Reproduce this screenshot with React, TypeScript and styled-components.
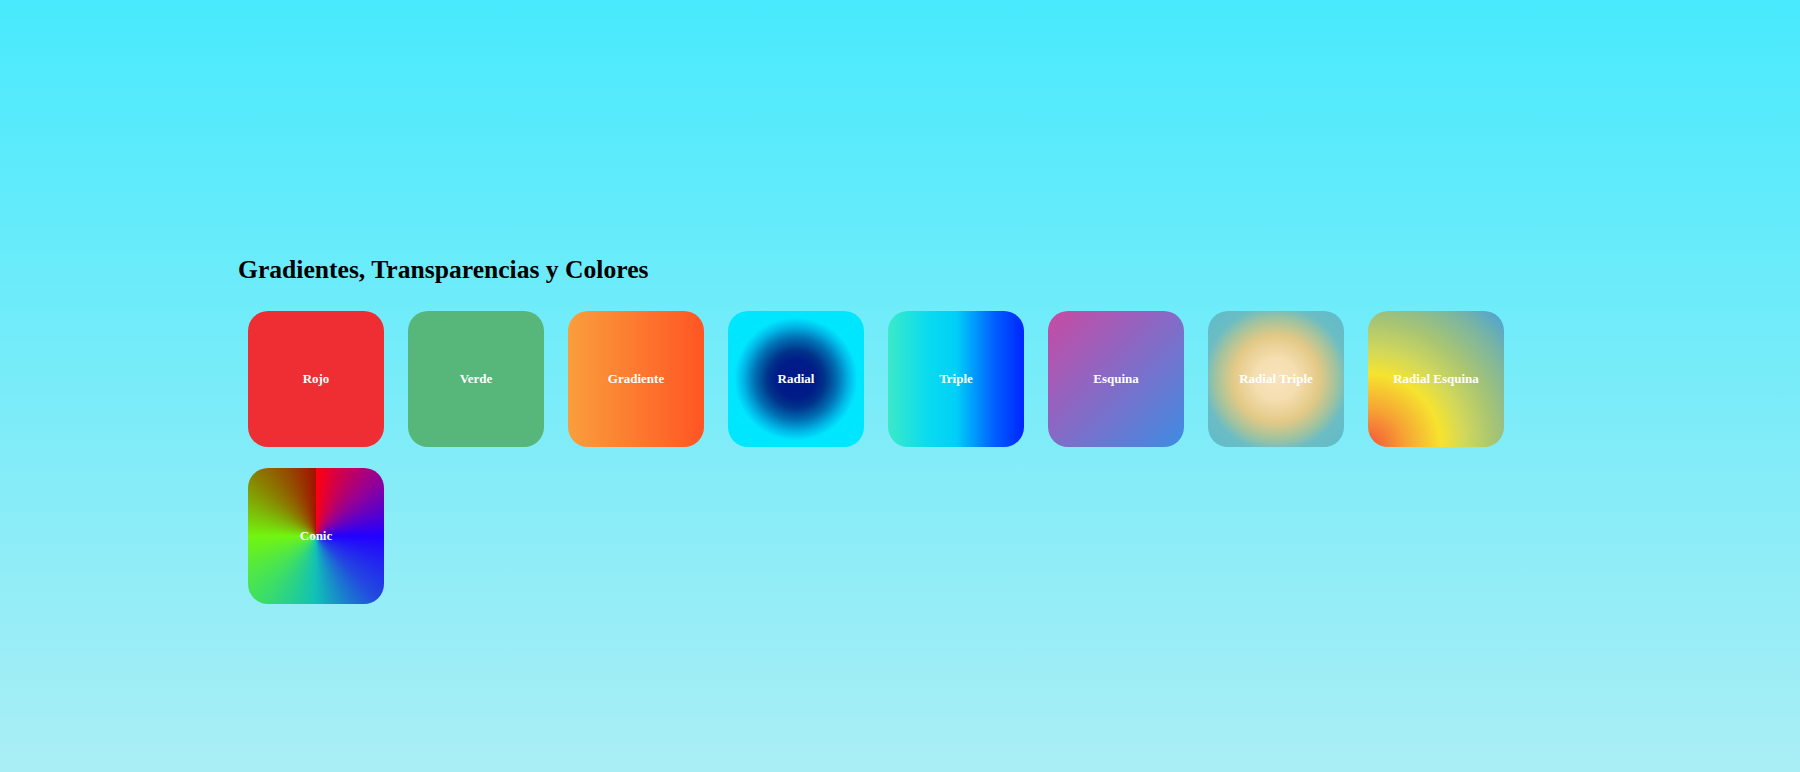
import React from "react";
import styled, { createGlobalStyle } from "styled-components";

const GlobalStyle = createGlobalStyle`
  html, body {
    margin: 0;
    padding: 0;
  }
  body {
    min-height: 772px;
    background: linear-gradient(to bottom, #48eafd 0%, #aaeef5 100%);
    font-family: "Liberation Serif", "Times New Roman", serif;
  }
`;

const Page = styled.main`
  min-height: 772px;
  box-sizing: border-box;
  padding: 255px 0 0 238px;
`;

const Title = styled.h2`
  margin: 0;
  font-size: 25.6px;
  line-height: 30px;
  font-weight: bold;
  color: #000;
`;

const Grid = styled.div`
  display: flex;
  flex-wrap: wrap;
  column-gap: 24px;
  row-gap: 21px;
  margin: 26px 0 0 10px;
  width: 1300px;
`;

const Card = styled.div<{ $bg: string }>`
  width: 136px;
  height: 136px;
  border-radius: 20px;
  background: ${(p) => p.$bg};
  display: flex;
  align-items: center;
  justify-content: center;
  color: #fff;
  font-size: 13px;
  font-weight: bold;
  text-align: center;
`;

const cards: { label: string; bg: string }[] = [
  { label: "Rojo", bg: "#ee2e32" },
  { label: "Verde", bg: "#57b67a" },
  { label: "Gradiente", bg: "linear-gradient(to right, #fa9e3c, #ff5523)" },
  {
    label: "Radial",
    bg: "radial-gradient(circle at center, #001a85 0%, #001c88 20%, #00348a 30%, #0070b4 43%, #00b8e8 55%, #00e6ff 64%, #00e6ff 100%)",
  },
  {
    label: "Triple",
    bg: "linear-gradient(to right, #3ce9c8 0%, #08dbf0 30%, #00d0f8 50%, #0060ff 78%, #0024ff 100%)",
  },
  { label: "Esquina", bg: "linear-gradient(to bottom right, #c94aa3 0%, #8a68c4 45%, #3e8ce2 100%)" },
  {
    label: "Radial Triple",
    bg: "radial-gradient(circle at center, #f9e3bb 0%, #f5deb0 22%, #e3c986 45%, #a4c39d 62%, #6bbdc4 75%, #5ebbca 100%)",
  },
  {
    label: "Radial Esquina",
    bg: "radial-gradient(circle at bottom left, #f4523a 0%, #f6a534 20%, #f6e32f 38%, #d2d85a 50%, #a6c474 66%, #78b4a4 84%, #48a0dc 100%)",
  },
  {
    label: "Conic",
    bg: "conic-gradient(from 0deg at center, #ff0010 0deg, #9a0090 45deg, #2200ff 90deg, #2248e0 135deg, #10c0b8 180deg, #40e060 225deg, #72f510 270deg, #8a7e00 315deg, #a01400 359deg)",
  },
];

export default function App() {
  return (
    <>
      <GlobalStyle />
      <Page>
        <Title>Gradientes, Transparencias y Colores</Title>
        <Grid>
          {cards.map((c) => (
            <Card key={c.label} $bg={c.bg}>
              {c.label}
            </Card>
          ))}
        </Grid>
      </Page>
    </>
  );
}
